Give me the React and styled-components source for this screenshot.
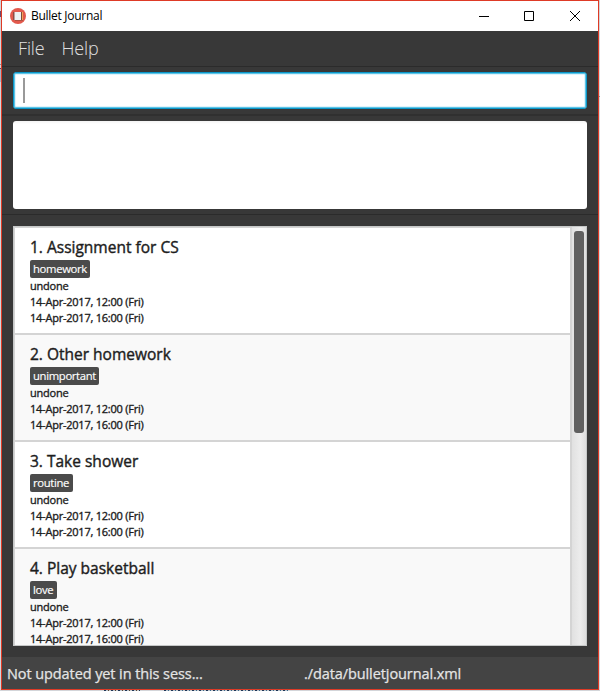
import React from "react";
import styled, { createGlobalStyle } from "styled-components";

const GlobalStyle = createGlobalStyle`
  * { box-sizing: border-box; }
  body {
    margin: 0;
    overflow: hidden;
    background: #d9dadc;
    font-family: "Segoe UI", "Open Sans", sans-serif;
  }
`;

const Desktop = styled.div`
  height: 691px;
  padding: 0 1px 1px;
  background:
    linear-gradient(#6d4a6b, #6d4a6b) 0 11px / 1px 6px no-repeat,
    linear-gradient(#8a8f98, #8a8f98) 0 64px / 1px 1px no-repeat,
    linear-gradient(#4a4f58, #4a4f58) 0 68px / 1px 1px no-repeat,
    linear-gradient(#a9b4c4, #a9b4c4) 0 69px / 1px 13px no-repeat,
    linear-gradient(#8c8c8c, #8c8c8c) 599px 96px / 1px 1px no-repeat,
    repeating-linear-gradient(90deg, #1d3557 0 2px, #b9c4ce 2px 4px, #5a4632 4px 5px, #c9ccd0 5px 7px) 104px 690px / 36px 1px no-repeat,
    repeating-linear-gradient(90deg, #1d3557 0 2px, #b9c4ce 2px 4px, #3a6a8c 4px 5px, #c9ccd0 5px 7px) 164px 690px / 124px 1px no-repeat,
    #d3d5d9;
`;

const Window = styled.main`
  height: 690px;
  width: 598px;
  display: flex;
  flex-direction: column;
  border: 1px solid #de3a26;
  background: #383838;
`;

const TitleBar = styled.header`
  height: 30px;
  flex: none;
  display: flex;
  align-items: center;
  padding-left: 8px;
  background: #fff;
`;

const WindowTitle = styled.h1`
  flex: 1;
  margin: 0 0 0 5px;
  font-size: 12px;
  line-height: 28px;
  font-weight: 400;
  letter-spacing: -0.28px;
  color: #000;
`;

const WindowButton = styled.button`
  width: ${(p) => p.$width}px;
  height: 30px;
  padding: 0;
  border: 0;
  display: grid;
  place-items: center;
  background: transparent;
`;

const MenuBar = styled.nav`
  height: 36px;
  flex: none;
  display: flex;
  gap: 17px;
  padding: 0 16px;
  border-bottom: 1px solid #2b2b2b;
`;

const MenuItem = styled.span`
  font-size: 18px;
  line-height: 35px;
  font-weight: 300;
  letter-spacing: -0.15px;
  color: #e0e0e0;
`;

const CommandPane = styled.section`
  height: 49px;
  flex: none;
  padding: 5px 11px 0;
  border-bottom: 2px solid #303030;
`;

const CommandBox = styled.div`
  height: 37px;
  border: 1px solid #0b96c8;
  border-radius: 3px;
  box-shadow: inset 0 0 0 1px #5cc4e6, inset 0 0 0 2px #dff3fb;
  padding: 5px 0 0 9px;
  background: #fff;
`;

const Caret = styled.div`
  width: 2px;
  height: 25px;
  background: #999;
`;

const ResultPane = styled.section`
  height: 99px;
  flex: none;
  padding: 5px 11px 0;
  border-bottom: 1px solid #2b2b2b;
`;

const ResultBox = styled.div`
  height: 88px;
  border-radius: 3px;
  background: linear-gradient(#f3f3f3, #fff 3px);
`;

const ListPane = styled.section`
  flex: 1;
  min-height: 0;
  padding: 11px 11px;
`;

const ListFrame = styled.div`
  height: 420px;
  display: flex;
  border: 1px solid #c6c8c8;
  overflow: hidden;
`;

const TaskList = styled.ol`
  flex: 1;
  margin: 0;
  padding: 1px 0 0;
  list-style: none;
  border: solid #d4d4d4;
  border-width: 0 2px 0 1px;
  background: linear-gradient(#d4d4d4 1px, #f9f9f9 1px);
`;

const TaskCard = styled.li`
  height: 107px;
  padding: 7px 0 0 15px;
  border-bottom: 2px solid #d4d4d4;
  background: #fff;
  color: #1d1d1d;
  &:nth-child(even) { background: #f9f9f9; }
`;

const TaskName = styled.h2`
  margin: 0;
  height: 25px;
  font-size: 15.5px;
  line-height: 25px;
  font-weight: 400;
  letter-spacing: 0;
  -webkit-text-stroke: 0.4px currentColor;
  white-space: pre;
`;

const Tag = styled.span`
  display: block;
  width: ${(p) => p.$width}px;
  height: 18px;
  padding-left: 3px;
  border-radius: 2px;
  background: #4b4b4b;
  color: #fff;
  font-size: 11.3px;
  line-height: 17px;
  letter-spacing: -0.34px;
  -webkit-text-stroke: 0.15px currentColor;
`;

const TaskDetail = styled.p`
  margin: 0;
  font-size: 11px;
  line-height: 16px;
  letter-spacing: -0.23px;
  -webkit-text-stroke: 0.35px currentColor;
`;

const ScrollTrack = styled.div`
  width: 14px;
  padding: 4px 2px;
  background: linear-gradient(90deg, #e1e1e1, #ececec 60%, #dedede);
`;

const ScrollThumb = styled.div`
  width: 10px;
  height: 202px;
  border-radius: 3px;
  background: #606060;
`;

const StatusBar = styled.footer`
  height: 32px;
  flex: none;
  display: grid;
  grid-template-columns: 297px 1fr;
  padding-left: 5px;
  background: #444;
`;

const StatusText = styled.span`
  font-size: 14.5px;
  line-height: 33px;
  letter-spacing: -0.09px;
  -webkit-text-stroke: 0.25px currentColor;
  color: #e4e4e4;
`;

const AppIcon = () => (
  <svg width="16" height="16" viewBox="0 0 16 16">
    <circle cx="8" cy="8" r="8" fill="#e2594c" />
    <path d="M3 4h2v8H3z" fill="#8e4b43" />
    <path d="M4.5 4H11v8H4.5z" fill="#edf1f2" />
    <path d="M11 4h2v8.5H5V12h6z" fill="#7d4b3b" />
    <path d="M12 4h1v8h-1z" fill="#f0a45b" />
  </svg>
);

const Glyph = ({ d }) => (
  <svg width="12" height="12" viewBox="0 0 12 12" fill="none" stroke="#000">
    <path d={d} />
  </svg>
);

const tasks = [
  { name: "1. Assignment for CS", tag: "homework", width: 60 },
  { name: "2. Other homework", tag: "unimportant", width: 69 },
  { name: "3. Take shower", tag: "routine", width: 43 },
  { name: "4. Play basketball", tag: "love", width: 27 },
];

export default function App() {
  return (
    <Desktop>
      <GlobalStyle />
      <Window>
        <TitleBar>
          <AppIcon />
          <WindowTitle>Bullet Journal</WindowTitle>
          <WindowButton $width={44} aria-label="Minimize"><Glyph d="M1 6.5h10" /></WindowButton>
          <WindowButton $width={46} aria-label="Maximize"><Glyph d="M1.5 1.5h9v9h-9z" /></WindowButton>
          <WindowButton $width={46} aria-label="Close"><Glyph d="M1 1l10 10M11 1L1 11" /></WindowButton>
        </TitleBar>
        <MenuBar>
          <MenuItem>File</MenuItem>
          <MenuItem>Help</MenuItem>
        </MenuBar>
        <CommandPane>
          <CommandBox><Caret /></CommandBox>
        </CommandPane>
        <ResultPane><ResultBox /></ResultPane>
        <ListPane>
          <ListFrame>
            <TaskList>
              {tasks.map((t) => (
                <TaskCard key={t.name}>
                  <TaskName>{t.name}</TaskName>
                  <Tag $width={t.width}>{t.tag}</Tag>
                  <TaskDetail>undone</TaskDetail>
                  <TaskDetail>14-Apr-2017, 12:00 (Fri)</TaskDetail>
                  <TaskDetail>14-Apr-2017, 16:00 (Fri)</TaskDetail>
                </TaskCard>
              ))}
            </TaskList>
            <ScrollTrack><ScrollThumb /></ScrollTrack>
          </ListFrame>
        </ListPane>
        <StatusBar>
          <StatusText>Not updated yet in this sess...</StatusText>
          <StatusText>./data/bulletjournal.xml</StatusText>
        </StatusBar>
      </Window>
    </Desktop>
  );
}
